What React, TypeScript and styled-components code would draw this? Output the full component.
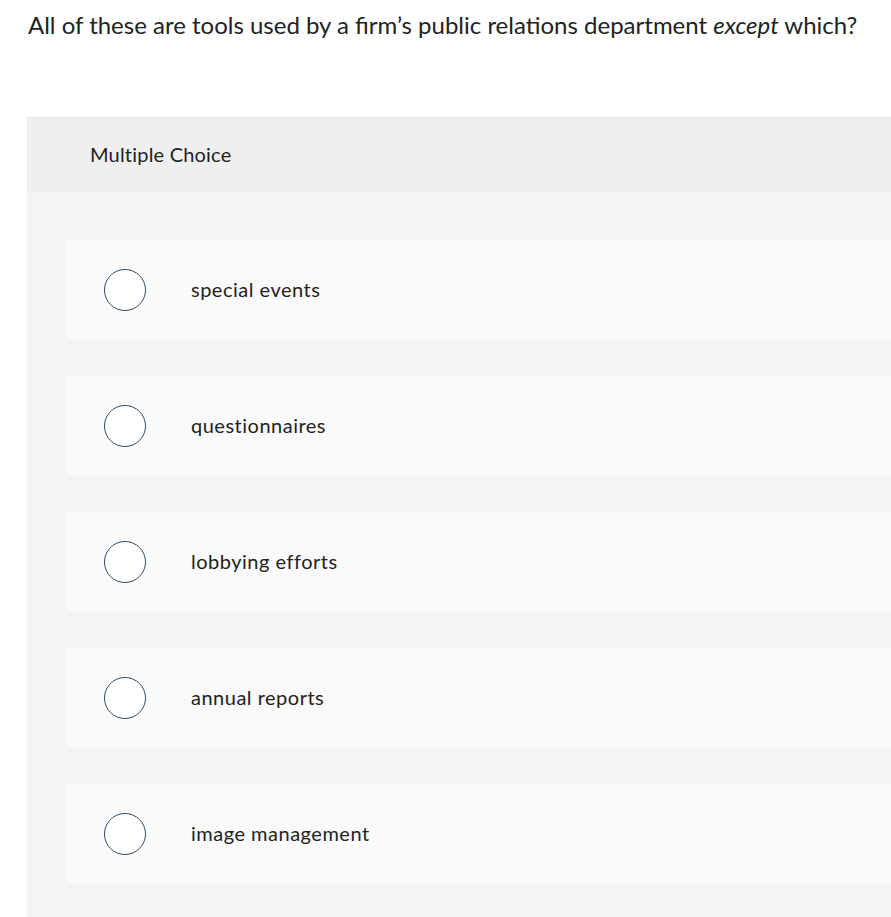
import React from "react";
import styled, { createGlobalStyle } from "styled-components";

const Global = createGlobalStyle`
  html, body { margin: 0; padding: 0; background: #ffffff; overflow: hidden; }
  body { font-family: Lato, "Open Sans", Arial, sans-serif; color: #222222; }
`;

const Page = styled.div`
  width: 891px;
  height: 917px;
  overflow: hidden;
`;

const Question = styled.p`
  margin: 0;
  padding: 10px 0 0 28px;
  font-size: 24px;
  line-height: 30px;
  color: #222222;
  white-space: nowrap;
  em { font-style: italic; }
`;

const Card = styled.section`
  margin: 77px 0 0 27px;
  width: 900px;
  background: #f4f4f4;
  border-top: 1px solid #e6e6e6;
`;

const Header = styled.div`
  height: 74px;
  box-sizing: border-box;
  display: flex;
  align-items: center;
  padding: 0 0 3px 63px;
  background: #efefef;
  font-size: 20px;
  letter-spacing: 0.2px;
  color: #222222;
`;

const List = styled.div`
  display: flex;
  flex-direction: column;
  gap: 37px;
  padding: 48px 0 40px 39px;
`;

const Option = styled.label`
  height: 99px;
  display: flex;
  align-items: center;
  background: #fafafa;
  padding-left: 38px;
  cursor: pointer;
`;

const Radio = styled.span`
  width: 40px;
  height: 40px;
  border-radius: 50%;
  border: 1px solid #2f4d68;
  background: #ffffff;
  flex: none;
`;

const OptionText = styled.span`
  margin-left: 45px;
  padding-bottom: 2px;
  font-size: 20px;
  color: #222222;
  letter-spacing: 0.5px;
`;

const options = [
  "special events",
  "questionnaires",
  "lobbying efforts",
  "annual reports",
  "image management",
];

export default function App() {
  return (
    <Page>
      <Global />
      <Question>
        All of these are tools used by a firm’s public relations department <em>except</em> which?
      </Question>
      <Card>
        <Header>Multiple Choice</Header>
        <List>
          {options.map((o) => (
            <Option key={o}>
              <Radio />
              <OptionText>{o}</OptionText>
            </Option>
          ))}
        </List>
      </Card>
    </Page>
  );
}
